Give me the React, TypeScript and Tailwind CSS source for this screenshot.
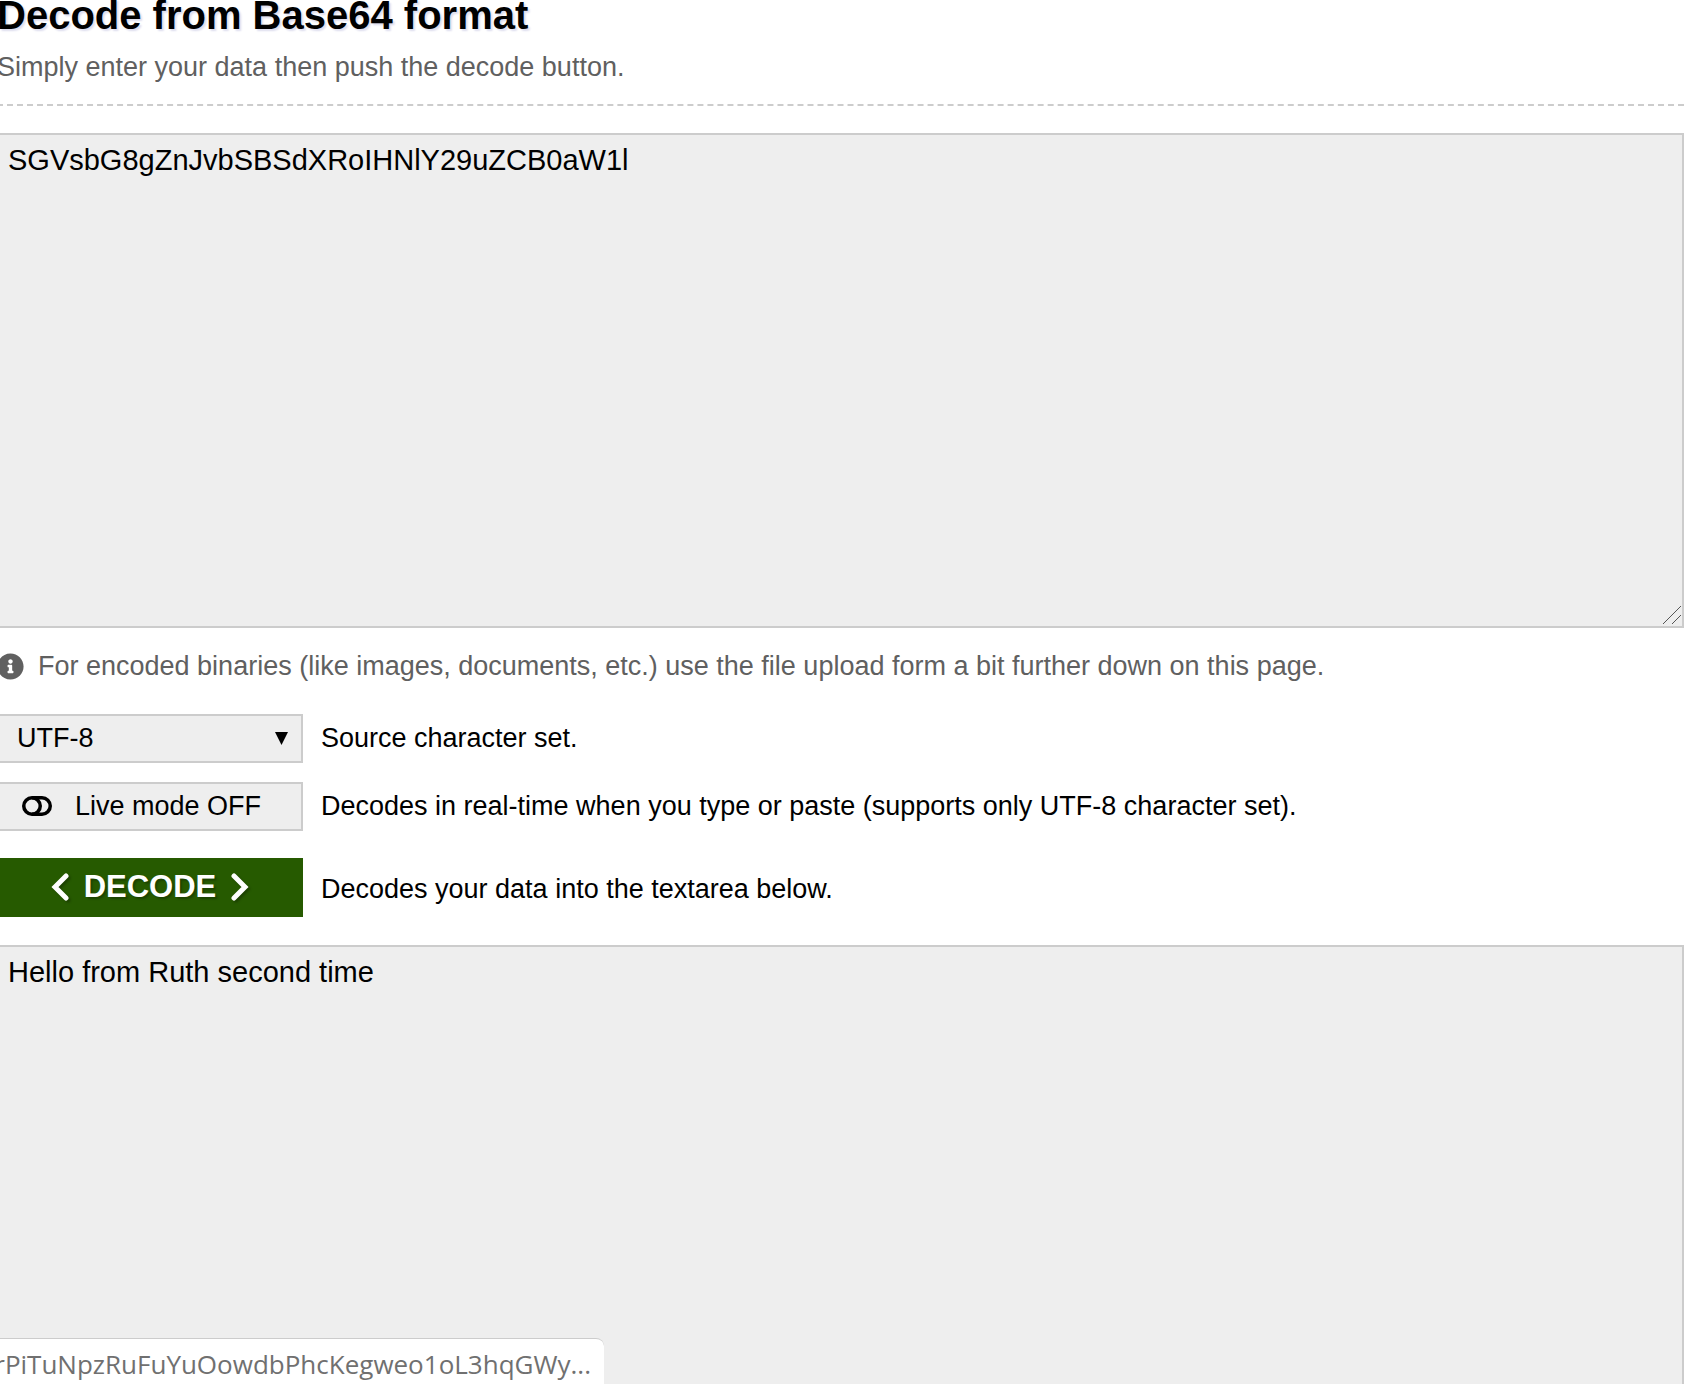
import { useState } from "react";
import { FaInfoCircle } from "react-icons/fa";

function ResizeGrip() {
  return (
    <svg className="pointer-events-none absolute right-[3px] bottom-[4px]" width="18" height="18" viewBox="0 0 18 18" fill="none" stroke="#555" aria-hidden="true">
      <path d="M0 18 18 0M9 18 18 9" />
    </svg>
  );
}

function Chevron({ d }: { d: string }) {
  return (
    <svg className="drop-shadow-[2px_2px_1px_#0004]" width="18" height="28" viewBox="0 0 18 28" fill="none" stroke="#fff" strokeWidth="5" strokeLinecap="round" aria-hidden="true">
      <path d={d} />
    </svg>
  );
}

export default function App() {
  const [source, setSource] = useState("SGVsbG8gZnJvbSBSdXRoIHNlY29uZCB0aW1l");
  const [result, setResult] = useState("Hello from Ruth second time");
  return (
    <div className="h-screen overflow-hidden bg-white">
      <main className="-ml-[3px] mr-[9px] flex flex-col font-['Liberation_Sans',Arial,sans-serif] text-[27px] leading-8 text-black">
        <h1 className="-mt-2 text-[40px] leading-[46px] font-bold [text-shadow:2px_2px_2px_#dde]">Decode from Base64 format</h1>
        <p className="mt-[13px] text-[#606060]">Simply enter your data then push the decode button.</p>
        <hr className="mt-[21px] border-t-2 border-dashed border-[#ccc]" />
        <div className="relative mt-[27px] h-[495px]">
          <textarea aria-label="Encoded data" value={source} onChange={(e) => setSource(e.target.value)} spellCheck={false} className="block h-full w-full resize-none border-2 border-[#ccc] bg-[#eee] px-[9px] py-[7px] text-[29px] leading-9 outline-none" />
          <ResizeGrip />
        </div>
        <p className="mt-[22px] flex items-center gap-[14px] text-[#606060]">
          <FaInfoCircle className="size-[27px]" />
          For encoded binaries (like images, documents, etc.) use the file upload form a bit further down on this page.
        </p>
        <div className="mt-8 flex items-center gap-[18px]">
          <div className="relative w-[306px]">
            <select id="charset" className="block h-[49px] w-full appearance-none border-2 border-[#ccc] bg-[#eee] px-[18px] pb-0.5 outline-none">
              <option>UTF-8</option>
            </select>
            <svg className="pointer-events-none absolute top-[18px] right-[15px]" width="13" height="13" viewBox="0 0 13 13" aria-hidden="true">
              <path d="M0 0H13L6.5 13Z" />
            </svg>
          </div>
          <label htmlFor="charset" className="pb-0.5">Source character set.</label>
        </div>
        <div className="mt-[19px] flex items-center gap-[18px]">
          <button type="button" className="flex h-[49px] w-[306px] items-center gap-[23px] border-2 border-[#ccc] bg-[#eee] px-[23px] pb-0.5">
            <svg width="30" height="20" viewBox="0 0 30 20" fill="none" stroke="#000" strokeWidth="3.5" aria-hidden="true">
              <circle cx="10" cy="10" r="8.25" />
              <path d="M10 1.75H20A8.25 8.25 0 0 1 20 18.25H10" />
            </svg>
            Live mode OFF
          </button>
          <span className="pb-0.5">Decodes in real-time when you type or paste (supports only UTF-8 character set).</span>
        </div>
        <div className="mt-[27px] flex items-center gap-[18px]">
          <button type="button" className="flex h-[59px] w-[306px] items-center justify-center gap-[15px] bg-[#265a00] pb-0.5 text-[31px] font-bold text-white [text-shadow:2px_2px_2px_#0004]">
            <Chevron d="M15 3 4 14 15 25" />
            DECODE
            <Chevron d="M3 3 14 14 3 25" />
          </button>
          <span className="pt-0.5">Decodes your data into the textarea below.</span>
        </div>
        <textarea aria-label="Decoded data" value={result} onChange={(e) => setResult(e.target.value)} spellCheck={false} className="mt-7 block h-[495px] resize-none border-2 border-[#ccc] bg-[#eee] px-[9px] py-[7px] text-[29px] leading-9 outline-none" />
      </main>
      <div className="fixed bottom-0 left-0 flex h-[46px] w-[604px] justify-end overflow-hidden rounded-tr-lg border-t border-[#ccc] bg-white pt-[7px] pr-[13px] font-['Open_Sans','Noto_Sans',sans-serif] text-[26px] leading-9 whitespace-nowrap text-[#707070]">
        vrPiTuNpzRuFuYuOowdbPhcKegweo1oL3hqGWy...
      </div>
    </div>
  );
}
